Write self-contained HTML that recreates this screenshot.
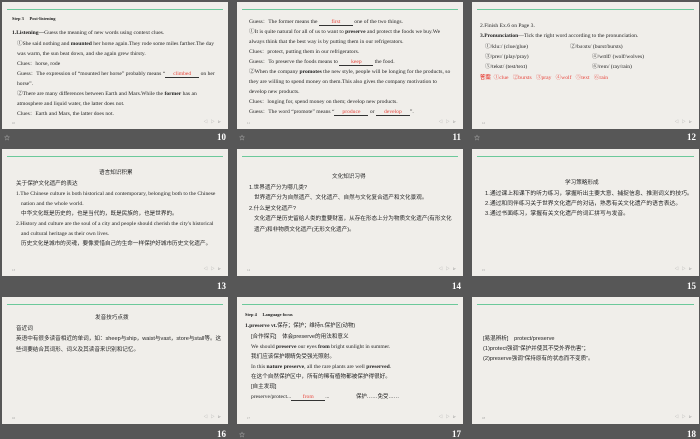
<!DOCTYPE html>
<html><head><meta charset="utf-8"><style>
*{margin:0;padding:0;box-sizing:border-box}
body{width:700px;height:438px;background:#575757;position:relative;overflow:hidden;font-family:"Liberation Serif","Noto Serif CJK SC",serif;color:#1e1e1e}
.s{position:absolute;width:226px;height:127px;background:#f0eeea;overflow:hidden}
.s .g{position:absolute;left:5px;right:5px;top:7px;height:1px;background:#6cc99b}
.s .l{position:absolute;white-space:nowrap;font-size:5.6px;line-height:6px}
.s .pi{position:absolute;left:10px;bottom:4px;font-size:3px;color:#999}
.s .nv{position:absolute;right:6px;bottom:4px;font-size:4px;color:#999;letter-spacing:1px}
.n{position:absolute;color:#fff;font-weight:bold;font-size:9px;font-family:"Liberation Serif",serif}
.ic{position:absolute;color:#ccc;font-size:6px}
.r{color:#e8453c}
.u{display:inline-block;border-bottom:0.6px solid #333;text-align:center;color:#e8453c;line-height:5px}
.cn{font-family:"Liberation Sans","Noto Sans CJK SC",sans-serif;font-size:5.4px}
b{font-weight:bold}
</style></head><body>

<div class="s" style="left:2px;top:2px">
<div class="g"></div>
<div class="l" style="left:10px;top:14px;font-size:4.5px"><b>Step 3</b> &nbsp;&nbsp;&nbsp; <b>Post-listening</b></div>
<div class="l" style="left:10px;top:28px"><b>1.Listening—</b>Guess the meaning of new words using context clues.</div>
<div class="l" style="left:15px;top:39px">①She said nothing and <b>mounted</b> her horse again.They rode some miles farther.The day</div>
<div class="l" style="left:15px;top:49px">was warm, the sun beat down, and she again grew thirsty.</div>
<div class="l" style="left:15px;top:59px">Clues：horse, rode</div>
<div class="l" style="left:15px;top:69px">Guess：The expression of “mounted her horse” probably means “<span class="u" style="width:34px">climbed</span> on her</div>
<div class="l" style="left:15px;top:79px">horse”.</div>
<div class="l" style="left:15px;top:89px">②There are many differences between Earth and Mars.While the <b>former</b> has an</div>
<div class="l" style="left:15px;top:99px">atmosphere and liquid water, the latter does not.</div>
<div class="l" style="left:15px;top:109px">Clues：Earth and Mars, the latter does not.</div>
<div class="pi">10</div><div class="nv">◁ ▷ ⊳</div>
</div>
<div class="ic" style="left:4px;top:133px">☆</div><div class="n" style="left:205px;top:132px;width:21px;text-align:right">10</div>

<div class="s" style="left:237px;top:2px">
<div class="g"></div>
<div class="l" style="left:12px;top:17px">Guess：The former means the <span class="u" style="width:34px">first</span> one of the two things.</div>
<div class="l" style="left:12px;top:27px">①It is quite natural for all of us to want to <b>preserve</b> and protect the foods we buy.We</div>
<div class="l" style="left:12px;top:37px">always think that the best way is by putting them in our refrigerators.</div>
<div class="l" style="left:12px;top:47px">Clues：protect, putting them in our refrigerators.</div>
<div class="l" style="left:12px;top:57px">Guess：To preserve the foods means to <span class="u" style="width:34px">keep</span> the food.</div>
<div class="l" style="left:12px;top:67px">②When the company <b>promotes</b> the new style, people will be longing for the products, so</div>
<div class="l" style="left:12px;top:77px">they are willing to spend money on them.This also gives the company motivation to</div>
<div class="l" style="left:12px;top:87px">develop new products.</div>
<div class="l" style="left:12px;top:97px">Clues：longing for, spend money on them; develop new products.</div>
<div class="l" style="left:12px;top:107px">Guess：The word “promote” means “<span class="u" style="width:34px">produce</span> or <span class="u" style="width:34px">develop</span>”.</div>
<div class="pi">11</div><div class="nv">◁ ▷ ⊳</div>
</div>
<div class="ic" style="left:239px;top:133px">☆</div><div class="n" style="left:440px;top:132px;width:21px;text-align:right">11</div>

<div class="s" style="left:472px;top:2px;width:227px">
<div class="g"></div>
<div class="l" style="left:8px;top:21px">2.Finish Ex.6 on Page 3.</div>
<div class="l" style="left:8px;top:31px"><b>3.Pronunciation</b>—Tick the right word according to the pronunciation.</div>
<div class="l" style="left:13px;top:42px">①/klu:/ (clue/glue)</div>
<div class="l" style="left:98px;top:42px">②/bə:sts/ (burst/bursts)</div>
<div class="l" style="left:13px;top:52px">③/preɪ/ (play/pray)</div>
<div class="l" style="left:120px;top:52px">④/wʊlf/ (wolf/wolves)</div>
<div class="l" style="left:13px;top:62px">⑤/tekst/ (test/text)</div>
<div class="l" style="left:120px;top:62px">⑥/reɪn/ (ray/rain)</div>
<div class="l r" style="left:8px;top:73px"><b class="cn">答案</b>&nbsp; ①clue &nbsp; ②bursts &nbsp; ③pray &nbsp; ④wolf &nbsp; ⑤text &nbsp; ⑥rain</div>
<div class="pi">12</div><div class="nv">◁ ▷ ⊳</div>
</div>
<div class="ic" style="left:474px;top:133px">☆</div><div class="n" style="left:675px;top:132px;width:21px;text-align:right">12</div>

<div class="s" style="left:2px;top:149px">
<div class="g"></div>
<div class="l cn" style="left:97px;top:21px">语言知识积累</div>
<div class="l cn" style="left:14px;top:32px">关于保护文化遗产的表达</div>
<div class="l" style="left:14px;top:42px">1.The Chinese culture is both historical and contemporary, belonging both to the Chinese</div>
<div class="l" style="left:19px;top:52px">nation and the whole world.</div>
<div class="l cn" style="left:19px;top:62px">中华文化既是历史的，也是当代的，既是民族的，也是世界的。</div>
<div class="l" style="left:14px;top:72px">2.History and culture are the soul of a city and people should cherish the city's historical</div>
<div class="l" style="left:19px;top:82px">and cultural heritage as their own lives.</div>
<div class="l cn" style="left:19px;top:92px">历史文化是城市的灵魂，要像爱惜自己的生命一样保护好城市历史文化遗产。</div>
<div class="pi">13</div><div class="nv">◁ ▷ ⊳</div>
</div>
<div class="n" style="left:205px;top:281px;width:21px;text-align:right">13</div>

<div class="s" style="left:237px;top:149px">
<div class="g"></div>
<div class="l cn" style="left:95px;top:25px">文化知识习得</div>
<div class="l cn" style="left:12px;top:36px">1.世界遗产分为哪几类?</div>
<div class="l cn" style="left:17px;top:46px">世界遗产分为自然遗产、文化遗产、自然与文化复合遗产和文化景观。</div>
<div class="l cn" style="left:12px;top:57px">2.什么是文化遗产?</div>
<div class="l cn" style="left:17px;top:67px">文化遗产是历史留给人类的重要财富，从存在形态上分为物质文化遗产(有形文化</div>
<div class="l cn" style="left:17px;top:78px">遗产)和非物质文化遗产(无形文化遗产)。</div>
<div class="pi">14</div><div class="nv">◁ ▷ ⊳</div>
</div>
<div class="n" style="left:440px;top:281px;width:21px;text-align:right">14</div>

<div class="s" style="left:472px;top:149px;width:227px">
<div class="g"></div>
<div class="l cn" style="left:93px;top:31px">学习策略形成</div>
<div class="l cn" style="left:13px;top:42px;font-size:5.8px">1.通过课上和课下的听力练习，掌握听出主要大意、捕捉信息、推测词义的技巧。</div>
<div class="l cn" style="left:13px;top:52px;font-size:5.8px">2.通过和同伴练习关于世界文化遗产的对话，熟悉有关文化遗产的语言表达。</div>
<div class="l cn" style="left:13px;top:62px;font-size:5.8px">3.通过书面练习，掌握有关文化遗产的词汇拼写与发音。</div>
<div class="pi">15</div><div class="nv">◁ ▷ ⊳</div>
</div>
<div class="n" style="left:675px;top:281px;width:21px;text-align:right">15</div>

<div class="s" style="left:2px;top:297px">
<div class="g"></div>
<div class="l cn" style="left:93px;top:18px">发音技巧点拨</div>
<div class="l cn" style="left:14px;top:29px">音近词</div>
<div class="l cn" style="left:14px;top:39px">英语中有很多读音相近的单词，如：sheep与ship，waist与vast，store与stall等。这</div>
<div class="l cn" style="left:14px;top:50px">些词要结合其词形、词义及其读音来识别和记忆。</div>
<div class="pi">16</div><div class="nv">◁ ▷ ⊳</div>
</div>
<div class="n" style="left:205px;top:429px;width:21px;text-align:right">16</div>

<div class="s" style="left:237px;top:297px">
<div class="g"></div>
<div class="l" style="left:8px;top:15px;font-size:4.5px"><b>Step 4</b> &nbsp;&nbsp;&nbsp; <b>Language focus</b></div>
<div class="l" style="left:8px;top:26px"><b>1.preserve vt.</b><span class="cn">保存；保护；维持n.保护区(动物)</span></div>
<div class="l cn" style="left:14px;top:37px">[合作探究]　体会preserve的用法和意义</div>
<div class="l" style="left:14px;top:47px">We should <b>preserve</b> our eyes <b>from</b> bright sunlight in summer.</div>
<div class="l cn" style="left:14px;top:57px">我们应该保护眼睛免受强光照射。</div>
<div class="l" style="left:14px;top:67px">In this <b>nature preserve</b>, all the rare plants are well <b>preserved</b>.</div>
<div class="l cn" style="left:14px;top:77px">在这个自然保护区中，所有的稀有植物都被保护得很好。</div>
<div class="l cn" style="left:14px;top:87px">[自主发现]</div>
<div class="l" style="left:14px;top:97px">preserve/protect...<span class="u" style="width:34px">from</span>... &nbsp;&nbsp;&nbsp;&nbsp;&nbsp;&nbsp;&nbsp;&nbsp;&nbsp;&nbsp;&nbsp;&nbsp;&nbsp;&nbsp;&nbsp;&nbsp;&nbsp;&nbsp;<span class="cn">保护……免受……</span></div>
<div class="pi">17</div><div class="nv">◁ ▷ ⊳</div>
</div>
<div class="ic" style="left:239px;top:430px">☆</div><div class="n" style="left:440px;top:429px;width:21px;text-align:right">17</div>

<div class="s" style="left:472px;top:297px;width:227px">
<div class="g"></div>
<div class="l cn" style="left:11px;top:39px">[易混辨析]　protect/preserve</div>
<div class="l cn" style="left:11px;top:49px">(1)protect强调“保护并使其不受外界伤害”；</div>
<div class="l cn" style="left:11px;top:59px">(2)preserve强调“保持原有的状态而不变质”。</div>
<div class="pi">18</div><div class="nv">◁ ▷ ⊳</div>
</div>
<div class="n" style="left:675px;top:429px;width:21px;text-align:right">18</div>

</body></html>
